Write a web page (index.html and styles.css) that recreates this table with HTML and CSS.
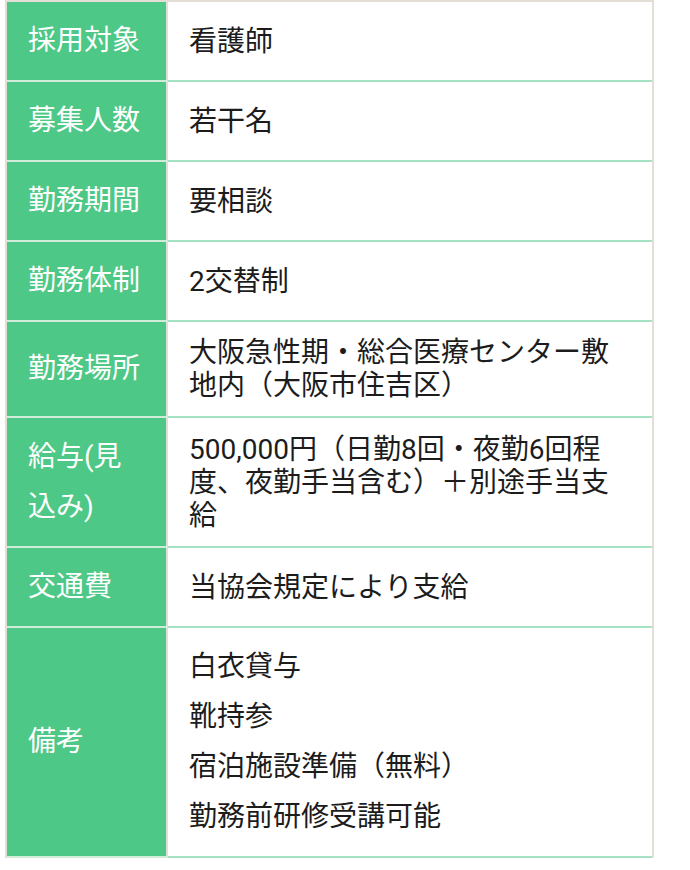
FILE: index.html
```html
<!DOCTYPE html>
<html lang="ja">
<head>
<meta charset="utf-8">
<title>募集要項</title>
<link rel="stylesheet" href="styles.css">
</head>
<body>
<div class="wrap">
  <table class="spec">
    <tbody>
      <tr><th>採用対象</th><td>看護師</td></tr>
      <tr><th>募集人数</th><td>若干名</td></tr>
      <tr><th>勤務期間</th><td>要相談</td></tr>
      <tr><th>勤務体制</th><td>2交替制</td></tr>
      <tr><th>勤務場所</th><td>大阪急性期・総合医療センター敷地内（大阪市住吉区）</td></tr>
      <tr><th>給与(見込み)</th><td>500,000円（日勤8回・夜勤6回程度、夜勤手当含む）＋別途手当支給</td></tr>
      <tr><th>交通費</th><td>当協会規定により支給</td></tr>
      <tr><th>備考</th><td class="list">
        <div class="item">白衣貸与</div>
        <div class="item">靴持参</div>
        <div class="item">宿泊施設準備（無料）</div>
        <div class="item">勤務前研修受講可能</div>
      </td></tr>
    </tbody>
  </table>
</div>
</body>
</html>
```

FILE: styles.css
```css
html, body {
  margin: 0;
  padding: 0;
  background: #ffffff;
}

.wrap {
  padding: 0 0 0 5px;
}

.spec {
  border-collapse: separate;
  border-spacing: 0;
  width: 649px;
  border: 2px solid #e3ded6;
  border-bottom: none;
  font-family: Roboto, "Noto Sans CJK JP", sans-serif;
  font-size: 28px;
}

.spec th {
  width: 117px;
  padding: 14px 21px;
  background: #4ec886;
  color: #ffffff;
  font-weight: normal;
  text-align: left;
  vertical-align: middle;
  line-height: 50px;
  border-right: 2px solid #e3ded6;
  border-bottom: 2px solid #d2ecda;
}

.spec td {
  padding: 14px 30px 14px 21px;
  color: #1c1c1c;
  vertical-align: middle;
  line-height: 33px;
  border-bottom: 2px solid #a4e2c3;
}

.spec td.list .item {
  line-height: 50px;
}
```
